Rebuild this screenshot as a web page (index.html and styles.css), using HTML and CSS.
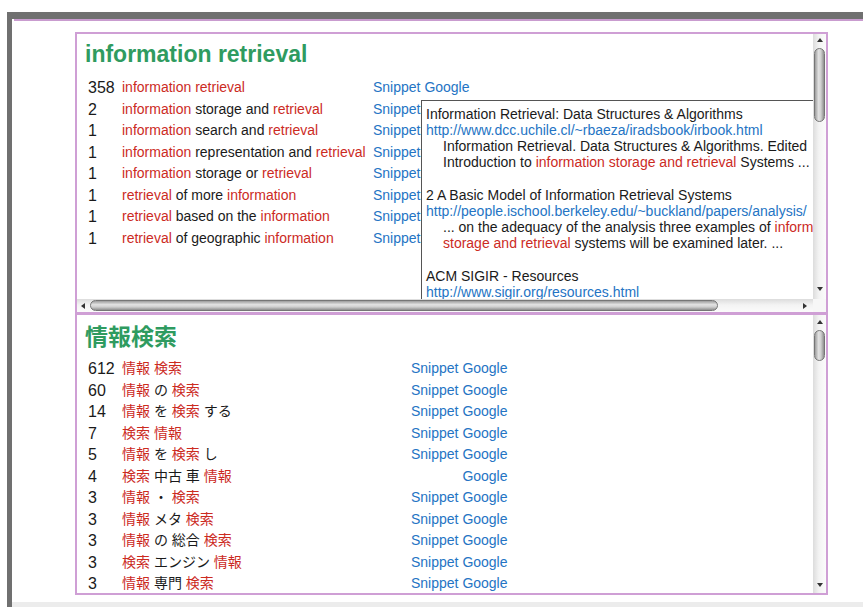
FILE: index.html
```html
<!DOCTYPE html>
<html lang="ja">
<head>
<meta charset="utf-8">
<title>information retrieval / 情報検索</title>
<link rel="stylesheet" href="styles.css">
</head>
<body>
<div class="frame">
  <div class="page">
    <div class="panes">

      <section class="pane pane-en">
        <div class="viewport">
          <div class="doc">
            <h1 class="query">information retrieval</h1>
            <div class="phrases">
              <div class="row"><span class="count">358</span><span class="phrase"><em>information</em> <em>retrieval</em></span><span class="links"><a href="#">Snippet</a> <a href="#">Google</a></span></div>
              <div class="row"><span class="count">2</span><span class="phrase"><em>information</em> storage and <em>retrieval</em></span><span class="links"><a href="#">Snippet</a> <a href="#">Google</a></span></div>
              <div class="row"><span class="count">1</span><span class="phrase"><em>information</em> search and <em>retrieval</em></span><span class="links"><a href="#">Snippet</a> <a href="#">Google</a></span></div>
              <div class="row"><span class="count">1</span><span class="phrase"><em>information</em> representation and <em>retrieval</em></span><span class="links"><a href="#">Snippet</a> <a href="#">Google</a></span></div>
              <div class="row"><span class="count">1</span><span class="phrase"><em>information</em> storage or <em>retrieval</em></span><span class="links"><a href="#">Snippet</a> <a href="#">Google</a></span></div>
              <div class="row"><span class="count">1</span><span class="phrase"><em>retrieval</em> of more <em>information</em></span><span class="links"><a href="#">Snippet</a> <a href="#">Google</a></span></div>
              <div class="row"><span class="count">1</span><span class="phrase"><em>retrieval</em> based on the <em>information</em></span><span class="links"><a href="#">Snippet</a> <a href="#">Google</a></span></div>
              <div class="row"><span class="count">1</span><span class="phrase"><em>retrieval</em> of geographic <em>information</em></span><span class="links"><a href="#">Snippet</a> <a href="#">Google</a></span></div>
            </div>
          </div>

          <div class="snippets">
            <div class="result">
              <div class="result-title">Information Retrieval: Data Structures &amp; Algorithms</div>
              <a class="url" href="#">http://www.dcc.uchile.cl/~rbaeza/iradsbook/irbook.html</a>
              <div class="excerpt">Information Retrieval. Data Structures &amp; Algorithms. Edited<br>Introduction to <em>information storage and retrieval</em> Systems ...</div>
            </div>
            <div class="result">
              <div class="result-title">2 A Basic Model of Information Retrieval Systems</div>
              <a class="url" href="#">http://people.ischool.berkeley.edu/~buckland/papers/analysis/</a>
              <div class="excerpt">... on the adequacy of the analysis three examples of <em>information</em><br><em>storage and retrieval</em> systems will be examined later. ...</div>
            </div>
            <div class="result">
              <div class="result-title">ACM SIGIR - Resources</div>
              <a class="url" href="#">http://www.sigir.org/resources.html</a>
            </div>
          </div>
        </div>

        <div class="vscroll">
          <span class="arrow arrow-up"></span>
          <span class="thumb"></span>
          <span class="track-rest"></span>
          <span class="arrow arrow-down"></span>
        </div>
        <div class="hscroll">
          <span class="arrow arrow-left"></span>
          <span class="thumb"></span>
          <span class="track-rest"></span>
          <span class="arrow arrow-right"></span>
        </div>
        <div class="corner"></div>
      </section>

      <section class="pane pane-ja">
        <div class="viewport">
          <div class="doc">
            <h1 class="query">情報検索</h1>
            <div class="phrases">
              <div class="row"><span class="count">612</span><span class="phrase"><em>情報</em> <em>検索</em></span><span class="links"><a href="#">Snippet</a> <a href="#">Google</a></span></div>
              <div class="row"><span class="count">60</span><span class="phrase"><em>情報</em> の <em>検索</em></span><span class="links"><a href="#">Snippet</a> <a href="#">Google</a></span></div>
              <div class="row"><span class="count">14</span><span class="phrase"><em>情報</em> を <em>検索</em> する</span><span class="links"><a href="#">Snippet</a> <a href="#">Google</a></span></div>
              <div class="row"><span class="count">7</span><span class="phrase"><em>検索</em> <em>情報</em></span><span class="links"><a href="#">Snippet</a> <a href="#">Google</a></span></div>
              <div class="row"><span class="count">5</span><span class="phrase"><em>情報</em> を <em>検索</em> し</span><span class="links"><a href="#">Snippet</a> <a href="#">Google</a></span></div>
              <div class="row"><span class="count">4</span><span class="phrase"><em>検索</em> 中古 車 <em>情報</em></span><span class="links"><a href="#">Google</a></span></div>
              <div class="row"><span class="count">3</span><span class="phrase"><em>情報</em> ・ <em>検索</em></span><span class="links"><a href="#">Snippet</a> <a href="#">Google</a></span></div>
              <div class="row"><span class="count">3</span><span class="phrase"><em>情報</em> メタ <em>検索</em></span><span class="links"><a href="#">Snippet</a> <a href="#">Google</a></span></div>
              <div class="row"><span class="count">3</span><span class="phrase"><em>情報</em> の 総合 <em>検索</em></span><span class="links"><a href="#">Snippet</a> <a href="#">Google</a></span></div>
              <div class="row"><span class="count">3</span><span class="phrase"><em>検索</em> エンジン <em>情報</em></span><span class="links"><a href="#">Snippet</a> <a href="#">Google</a></span></div>
              <div class="row"><span class="count">3</span><span class="phrase"><em>情報</em> 専門 <em>検索</em></span><span class="links"><a href="#">Snippet</a> <a href="#">Google</a></span></div>
            </div>
          </div>
        </div>

        <div class="vscroll">
          <span class="arrow arrow-up"></span>
          <span class="thumb"></span>
          <span class="track-rest"></span>
          <span class="arrow arrow-down"></span>
        </div>
      </section>

    </div>
  </div>
  <div class="statusbar"></div>
</div>
</body>
</html>
```

FILE: styles.css
```css
* {
  box-sizing: border-box;
}

html,
body {
  margin: 0;
  background: #fff;
}

body {
  font-family: "Liberation Sans", "Noto Sans CJK JP", sans-serif;
  font-size: 14px;
  color: #1a1a1a;
}

/* window chrome around the two result panes */
.frame {
  margin: 12px 0 0 7px;
  height: 595px;
  border-top: 7px solid #707070;
  border-left: 5px solid #707070;
  display: flex;
  flex-direction: column;
}

.page {
  flex: 1;
  margin-left: 2px;
  border-top: 2px solid #c99ccf;
  padding: 11px 0 0 61px;
}

.statusbar {
  height: 5px;
  background: #ececec;
}

.panes {
  width: 753px;
  border: 2px solid #cf9fd5;
}

.pane {
  display: grid;
  grid-template-columns: 1fr 13px;
  height: 278px;
}

.pane-en {
  grid-template-rows: 1fr 13px;
}

.pane-ja {
  height: 281px;
  border-top: 3px solid #cf9fd5;
}

.viewport {
  position: relative;
  overflow: hidden;
  background: #fff;
}

.doc {
  padding: 7px 8px 0;
}

.query {
  margin: 0 0 10px;
  font-size: 23px;
  line-height: 26px;
  font-weight: bold;
  color: #2f9b60;
  white-space: nowrap;
}

.pane-ja .query {
  padding-top: 2px;
  margin-bottom: 8px;
}

/* count / phrase / links table */
.phrases {
  display: grid;
  grid-template-columns: 34px 251px max-content;
  padding-left: 3px;
  line-height: 21.5px;
  white-space: nowrap;
}

.pane-ja .phrases {
  grid-template-columns: 34px 289px max-content;
}

.row {
  display: contents;
}

.count {
  font-size: 16px;
}

.links {
  text-align: right;
}

a {
  color: #2474c4;
  text-decoration: none;
}

em {
  font-style: normal;
  color: #cc2b1f;
}

/* snippet popup shown over the list */
.snippets {
  position: absolute;
  left: 344px;
  top: 66px;
  width: 440px;
  height: 260px;
  padding: 4.5px 4px;
  background: #fff;
  border: 1px solid #555;
  line-height: 16.2px;
  white-space: nowrap;
}

.result {
  margin-bottom: 16.5px;
}

.url {
  display: block;
}

.excerpt {
  padding-left: 17px;
}

/* scrollbars */
.vscroll {
  display: flex;
  flex-direction: column;
  align-items: center;
  background: linear-gradient(to right, #dcdcdc, #f3f3f3 45%, #fbfbfb);
}

.hscroll {
  display: flex;
  align-items: center;
  background: linear-gradient(to bottom, #dcdcdc, #f3f3f3 45%, #fbfbfb);
}

.corner {
  background: #f7f7f7;
}

.track-rest {
  flex: 1;
}

.arrow {
  width: 0;
  height: 0;
  flex: none;
}

.arrow-up {
  margin-top: 4px;
  border-left: 3px solid transparent;
  border-right: 3px solid transparent;
  border-bottom: 4px solid #333;
}

.arrow-down {
  margin-bottom: 8px;
  border-left: 3px solid transparent;
  border-right: 3px solid transparent;
  border-top: 4px solid #333;
}

.arrow-left {
  margin-left: 4px;
  border-top: 3px solid transparent;
  border-bottom: 3px solid transparent;
  border-right: 4px solid #333;
}

.arrow-right {
  margin-right: 6px;
  border-top: 3px solid transparent;
  border-bottom: 3px solid transparent;
  border-left: 4px solid #333;
}

.thumb {
  flex: none;
  border: 1px solid #767676;
  border-radius: 6px;
}

.vscroll .thumb {
  width: 11px;
  height: 74px;
  margin-top: 6px;
  background: linear-gradient(to right, #9c9c9c, #e2e2e2 40%, #d0d0d0 65%, #8e8e8e);
}

.hscroll .thumb {
  width: 628px;
  height: 11px;
  margin-left: 5px;
  background: linear-gradient(to bottom, #9c9c9c, #e2e2e2 40%, #d0d0d0 65%, #8e8e8e);
}

.pane-ja .arrow-up {
  margin-top: 5px;
}

.pane-ja .vscroll .thumb {
  height: 31px;
}

.pane-ja .arrow-down {
  margin-bottom: 6px;
}
```
